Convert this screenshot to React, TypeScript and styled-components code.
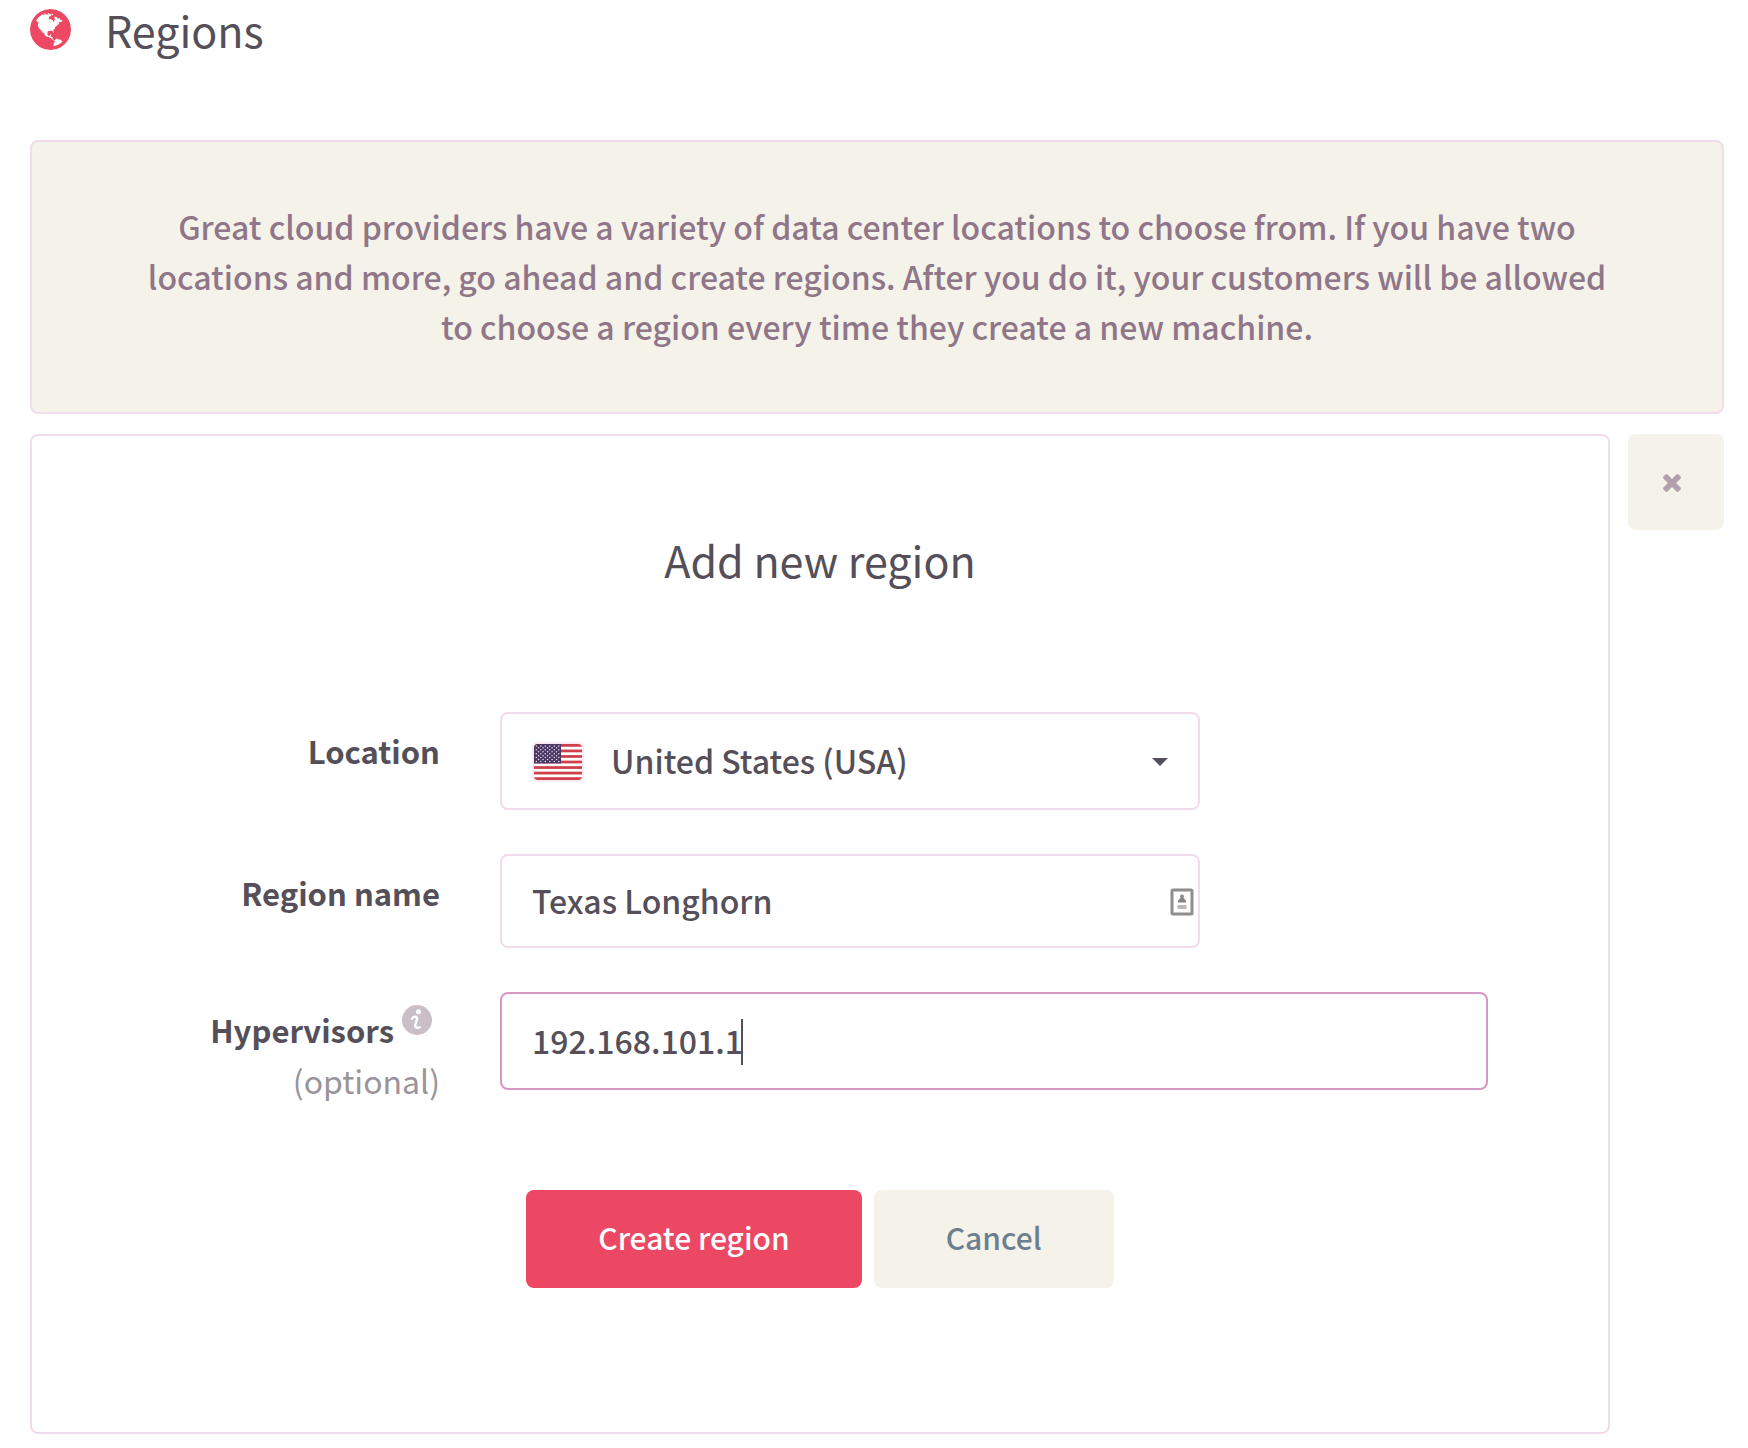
import React, { useState } from "react";
import styled, { createGlobalStyle } from "styled-components";

const color = {
  text: "#544f58",
  muted: "#999499",
  plum: "#8f7688",
  sand: "#f5f2ea",
  border: "#f0dcea",
  focus: "#d797c4",
  accent: "#ed4863",
  slate: "#6c7f90",
};

const GlobalStyle = createGlobalStyle`
  *, *::before, *::after { box-sizing: border-box; }
  body {
    margin: 0;
    background: #fff;
    color: ${color.text};
    font-family: "Noto Sans CJK SC", "Noto Sans", sans-serif;
    font-size: 32px;
    font-weight: 500;
    line-height: 50px;
  }
`;

const Page = styled.main`
  padding: 0 24px 14px 30px;
`;

const PageHeader = styled.header`
  display: flex;
  align-items: center;
  gap: 34px;
  margin-bottom: 82px;
`;

const Heading = styled.h1`
  margin: 0;
  font-size: 43px;
  font-weight: 400;
  line-height: 58px;
`;

const Banner = styled.p`
  margin: 0 0 20px;
  padding: 59px 100px 61px;
  border: 2px solid ${color.border};
  border-radius: 8px;
  background: ${color.sand};
  color: ${color.plum};
  text-align: center;
`;

const PanelRow = styled.div`
  display: flex;
  align-items: flex-start;
  gap: 18px;
`;

const Panel = styled.form`
  flex: 1;
  min-width: 0;
  padding: 94px 120px 144px 0;
  border: 2px solid ${color.border};
  border-radius: 8px;
`;

const PanelTitle = styled(Heading).attrs({ as: "h2" })`
  margin: 0 0 124px 120px;
  text-align: center;
`;

const CloseButton = styled.button`
  display: flex;
  align-items: center;
  justify-content: center;
  width: 96px;
  height: 96px;
  padding: 2px 8px 0 0;
  border: 0;
  border-radius: 8px;
  background: ${color.sand};
  color: #b3a0ae;
  cursor: pointer;
`;

const Rows = styled.div`
  display: grid;
  gap: 44px;
`;

const Row = styled.div`
  display: grid;
  grid-template-columns: 408px minmax(0, 1fr);
  column-gap: 60px;
  align-items: start;
`;

const LabelCell = styled.div`
  padding-top: 13px;
  text-align: right;
`;

const Label = styled.label`
  font-size: 31px;
  font-weight: 700;
`;

const LabelLine = styled.div`
  display: flex;
  justify-content: flex-end;
  gap: 8px;
  padding-right: 8px;
`;

const Optional = styled.div`
  color: ${color.muted};
  font-weight: 400;
`;

const Field = styled.div<{ $narrow?: boolean }>`
  position: relative;
  max-width: ${(p) => (p.$narrow ? "700px" : "none")};
`;

const Input = styled.input<{ $active?: boolean }>`
  display: block;
  width: 100%;
  height: ${(p) => (p.$active ? 98 : 94)}px;
  padding: 0 30px 2px;
  border: 2px solid ${(p) => (p.$active ? color.focus : color.border)};
  border-radius: 8px;
  outline: 0;
  background: #fff;
  color: inherit;
  font: inherit;
  caret-color: ${color.text};
`;

const Select = styled.select`
  display: block;
  width: 100%;
  height: 98px;
  padding: 0 80px 2px 109px;
  border: 2px solid ${color.border};
  border-radius: 8px;
  outline: 0;
  appearance: none;
  background: #fff;
  color: inherit;
  font: inherit;
`;

const Adornment = styled.span<{ $left?: number; $right?: number }>`
  position: absolute;
  top: 2px;
  bottom: 0;
  ${(p) => (p.$left !== undefined ? `left: ${p.$left}px;` : "")}
  ${(p) => (p.$right !== undefined ? `right: ${p.$right}px;` : "")}
  display: flex;
  align-items: center;
  pointer-events: none;
`;

const Cursor = styled.span`
  width: 2px;
  height: 46px;
  background: ${color.text};
`;

const Actions = styled.div`
  display: flex;
  justify-content: center;
  gap: 12px;
  margin: 85px 0 0 120px;
`;

const Button = styled.button<{ $primary?: boolean }>`
  height: 98px;
  padding: 0 72px 4px;
  border: 0;
  border-radius: 8px;
  background: ${(p) => (p.$primary ? color.accent : color.sand)};
  color: ${(p) => (p.$primary ? "#fff" : color.slate)};
  font: inherit;
  font-size: 30px;
  cursor: pointer;
`;

const GLOBE =
  "M768 128q209 0 385.5 103t279.5 279.5 103 385.5-103 385.5-279.5 279.5-385.5 103-385.5-103-279.5-279.5-103-385.5 103-385.5 279.5-279.5 385.5-103zm274 521q-2 1-9.5 9.5t-13.5 9.5q2 0 4.5-5t5-11 3.5-7q6-7 22-15 14-6 52-12 34-8 51 11-2-2 9.5-13t14.5-12q3-2 15-4.5t15-7.5l2-22q-12 1-17.5-7t-6.5-21q0 2-6 8 0-7-4.5-8t-11.5 1-9 1q-10-3-15-7.5t-8-16.5-4-15q-2-5-9.5-10.5t-9.5-10.5q-1-2-2.5-5.5t-3-6.5-4-5.5-5.5-2.5-7 5-7.5 10-4.5 5q-3-2-6-1.5t-4.5 1-4.5 3-5 3.5q-3 2-8.5 3t-8.5 2q15-5-1-11-10-4-16-3 9-4 7.5-12t-8.5-14h5q-1-4-8.5-8.5t-17.5-8.5-13-6q-8-5-34-9.5t-33-.5q-5 6-4.5 10.5t4 14 3.5 12.5q1 6-5.5 13t-6.5 12q0 7 14 15.5t10 21.5q-3 8-16 16t-16 12q-5 8-1.5 18.5t10.5 16.5q2 2 1.5 4t-3.5 4.5-5.5 4-6.5 3.5l-3 2q-11 5-20.5-6t-13.5-26q-7-25-16-30-23-8-29 1-5-13-41-26-25-9-58-4 6-1 0-15-7-15-19-12 3-6 4-17.5t1-13.5q3-13 12-23 1-1 7-8.5t9.5-13.5.5-6q35 4 50-11 5-5 11.5-17t10.5-17q9-6 14-5.5t14.5 5.5 14.5 5q14 1 15.5-11t-7.5-20q12 1 3-17-4-7-8-9-12-4-27 5-8 4 2 8-1-1-9.5 10.5t-16.5 17.5-16-5q-1-1-5.5-13.5t-9.5-13.5q-8 0-16 15 3-8-11-15t-24-8q19-12-8-27-7-4-20.5-5t-19.5 4q-5 7-5.5 11.5t5 8 10.5 5.5 11.5 4 8.5 3q14 10 8 14-2 1-8.5 3.5t-11.5 4.5-6 4q-3 4 0 14t-2 14q-5-5-9-17.5t-7-16.5q7 9-25 6l-10-1q-4 0-16 2t-20.5 1-13.5-8q-4-8 0-20 1-4 4-2-4-3-11-9.5t-10-8.5q-46 15-94 41 6 1 12-1 5-2 13-6.5t10-5.5q34-14 42-7l5-5q14 16 20 25-7-4-30-1-20 6-22 12 7 12 5 18-4-3-11.5-10t-14.5-11-15-5q-16 0-22 1-146 80-235 222 7 7 12 8 4 1 5 9t2.5 11 11.5-3q9 8 3 19 1-1 44 27 19 17 21 21 3 11-10 18-1-2-9-9t-9-4q-3 5 .5 18.5t10.5 12.5q-7 0-9.5 16t-2.5 35.5-1 23.5l2 1q-3 12 5.5 34.5t21.5 19.5q-13 3 20 43 6 8 8 9 3 2 12 7.5t15 10 10 10.5q4 5 10 22.5t14 23.5q-2 6 9.5 20t10.5 23q-1 0-2.5 1t-2.5 1q3 7 15.5 14t15.5 13q1 3 2 10t3 11 8 2q2-20-24-62-15-25-17-29-3-5-5.5-15.5t-4.5-14.5q2 0 6 1.5t8.5 3.5 7.5 4 2 3q-3 7 2 17.5t12 18.5 17 19 12 13q6 6 14 19.5t0 13.5q9 0 20 10.5t17 19.5q5 8 8 26t5 24q2 7 8.5 13.5t12.5 9.5l16 8 13 7q5 2 18.5 10.5t21.5 11.5q10 4 16 4t14.5-2.5 13.5-3.5q15-2 29 15t21 21q36 19 55 11-2 1 .5 7.5t8 15.5 9 14.5 5.5 8.5q5 6 18 15t18 15q6-4 7-9-3 8 7 20t18 10q14-3 14-32-31 15-49-18 0-1-2.5-5.5t-4-8.5-2.5-8.5 0-7.5 5-3q9 0 10-3.5t-2-12.5-4-13q-1-8-11-20t-12-15q-5 9-16 8t-16-9q0 1-1.5 5.5t-1.5 6.5q-13 0-15-1 1-3 2.5-17.5t3.5-22.5q1-4 5.5-12t7.5-14.5 4-12.5-4.5-9.5-17.5-2.5q-19 1-26 20-1 3-3 10.5t-5 11.5-9 7q-7 3-24 2t-24-5q-13-8-22.5-29t-9.5-37q0-10 2.5-26.5t3-25-5.5-24.5q3-2 9-9.5t10-10.5q2-1 4.5-1.5t4.5 0 4-1.5 3-6q-1-1-4-3-3-3-4-3 7 3 28.5-1.5t27.5 1.5q15 11 22-2 0-1-2.5-9.5t-.5-13.5q5 27 29 9 3 3 15.5 5t17.5 5q3 2 7 5.5t5.5 4.5 5-.5 8.5-6.5q10 14 12 24 11 40 19 44 7 3 11 2t4.5-9.5 0-14-1.5-12.5l-1-8v-18l-1-8q-15-3-18.5-12t1.5-18.5 15-18.5q1-1 8-3.5t15.5-6.5 12.5-8q21-19 15-35 7 0 11-9-1 0-5-3t-7.5-5-4.5-2q9-5 2-16 5-3 7.5-11t7.5-10q9 12 21 2 7-8 1-16 5-7 20.5-10.5t18.5-9.5q7 2 8-2t1-12 3-12q4-5 15-9t13-5l17-11q3-4 0-4 18 2 31-11 10-11-6-20 3-6-3-9.5t-15-5.5q3-1 11.5-.5t10.5-1.5q15-10-7-16-17-5-43 12zm-163 877q206-36 351-189-3-3-12.5-4.5t-12.5-3.5q-18-7-24-8 1-7-2.5-13t-8-9-12.5-8-11-7q-2-2-7-6t-7-5.5-7.5-4.5-8.5-2-10 1l-3 1q-3 1-5.5 2.5t-5.5 3-4 3 0 2.5q-21-17-36-22-5-1-11-5.5t-10.5-7-10-1.5-11.5 7q-5 5-6 15t-2 13q-7-5 0-17.5t2-18.5q-3-6-10.5-4.5t-12 4.5-11.5 8.5-9 6.5-8.5 5.5-8.5 7.5q-3 4-6 12t-5 11q-2-4-11.5-6.5t-9.5-5.5q2 10 4 35t5 38q7 31-12 48-27 25-29 40-4 22 12 26 0 7-8 20.5t-7 21.5q0 6 2 16z";

const TIMES =
  "M1490 1322q0 40-28 68l-136 136q-28 28-68 28t-68-28l-294-294-294 294q-28 28-68 28t-68-28l-136-136q-28-28-28-68t28-68l294-294-294-294q-28-28-28-68t28-68l136-136q28-28 68-28t68 28l294 294 294-294q28-28 68-28t68 28l136 136q28 28 28 68t-28 68l-294 294 294 294q28 28 28 68z";

const GlobeIcon = () => (
  <svg width="41" height="41" viewBox="0 128 1536 1536" aria-hidden="true">
    <path fill={color.accent} d={GLOBE} />
  </svg>
);

const TimesIcon = () => (
  <svg width="18" height="18" viewBox="302 366 1188 1188" aria-hidden="true">
    <path fill="currentColor" d={TIMES} />
  </svg>
);

const InfoIcon = () => (
  <svg width="30" height="30" viewBox="0 0 30 30" aria-hidden="true">
    <circle cx="15" cy="15" r="15" fill="#cbbfc7" />
    <circle cx="16.5" cy="6.8" r="2.5" fill="#fff" />
    <path
      d="M10 13.8C11 11.4 15.6 10.6 15 14.2L13.2 20.2C12.6 23.2 15.8 23.2 17.8 22.2"
      fill="none"
      stroke="#fff"
      strokeWidth="2.4"
      strokeLinecap="round"
    />
  </svg>
);

const FlagIcon = () => (
  <svg width="52" height="40" viewBox="-2 -2 52 40" aria-hidden="true">
    <rect x="-2" y="-2" width="52" height="40" rx="6" fill="#f9ebf5" />
    <clipPath id="flag-shape">
      <rect width="48" height="36" rx="4" />
    </clipPath>
    <g clipPath="url(#flag-shape)">
      <rect width="48" height="36" fill="#fff" />
      {[0, 1, 2, 3, 4, 5, 6].map((i) => (
        <rect key={i} y={(i * 72) / 13} width="48" height={36 / 13} fill="#cf404b" />
      ))}
      <rect width="27" height="19.4" fill="#4a3765" />
      {Array.from({ length: 9 }, (_, r) =>
        Array.from({ length: r % 2 ? 5 : 6 }, (_, c) => (
          <circle
            key={`${r}-${c}`}
            cx={2.3 + c * 4.5 + (r % 2 ? 2.25 : 0)}
            cy={1.9 + r * 1.95}
            r="0.75"
            fill="#e8e0ee"
          />
        )),
      )}
    </g>
  </svg>
);

const CaretIcon = () => (
  <svg width="16" height="8" viewBox="0 0 16 8" aria-hidden="true">
    <path d="M0 0H16L8 8Z" fill={color.text} />
  </svg>
);

const ContactIcon = () => (
  <svg width="24" height="28" viewBox="0 0 24 28" aria-hidden="true">
    <rect x="2" y="2" width="20" height="24" rx="1" fill="#fff" stroke="#8e8e8e" strokeWidth="3" />
    <circle cx="12" cy="8.5" r="2" fill="#8a8a8a" />
    <path d="M8 14.5V12.5L10.5 10H13.5L16 12.5V14.5Z" fill="#858585" />
    <rect x="7.5" y="17" width="9" height="4" fill="#b9b9b9" />
  </svg>
);

export default function App() {
  const [name, setName] = useState("Texas Longhorn");
  const [hosts, setHosts] = useState("192.168.101.1");

  return (
    <>
      <GlobalStyle />
      <Page>
        <PageHeader>
          <GlobeIcon />
          <Heading>Regions</Heading>
        </PageHeader>

        <Banner>
          Great cloud providers have a variety of data center locations to choose from. If you have two
          locations and more, go ahead and create regions. After you do it, your customers will be allowed to
          choose a region every time they create a new machine.
        </Banner>

        <PanelRow>
          <Panel onSubmit={(e) => e.preventDefault()}>
            <PanelTitle>Add new region</PanelTitle>
            <Rows>
              <Row>
                <LabelCell>
                  <Label htmlFor="location">Location</Label>
                </LabelCell>
                <Field $narrow>
                  <Select id="location" defaultValue="us">
                    <option value="us">United States (USA)</option>
                  </Select>
                  <Adornment $left={32}>
                    <FlagIcon />
                  </Adornment>
                  <Adornment $right={32}>
                    <CaretIcon />
                  </Adornment>
                </Field>
              </Row>
              <Row>
                <LabelCell>
                  <Label htmlFor="region-name">Region name</Label>
                </LabelCell>
                <Field $narrow>
                  <Input id="region-name" value={name} onChange={(e) => setName(e.target.value)} />
                  <Adornment $right={6}>
                    <ContactIcon />
                  </Adornment>
                </Field>
              </Row>
              <Row>
                <LabelCell>
                  <LabelLine>
                    <Label htmlFor="hypervisors">Hypervisors</Label>
                    <InfoIcon />
                  </LabelLine>
                  <Optional>(optional)</Optional>
                </LabelCell>
                <Field>
                  <Input id="hypervisors" $active value={hosts} onChange={(e) => setHosts(e.target.value)} />
                  <Adornment $left={241}>
                    <Cursor />
                  </Adornment>
                </Field>
              </Row>
            </Rows>
            <Actions>
              <Button type="submit" $primary>
                Create region
              </Button>
              <Button type="button">Cancel</Button>
            </Actions>
          </Panel>
          <CloseButton type="button" aria-label="Close">
            <TimesIcon />
          </CloseButton>
        </PanelRow>
      </Page>
    </>
  );
}
